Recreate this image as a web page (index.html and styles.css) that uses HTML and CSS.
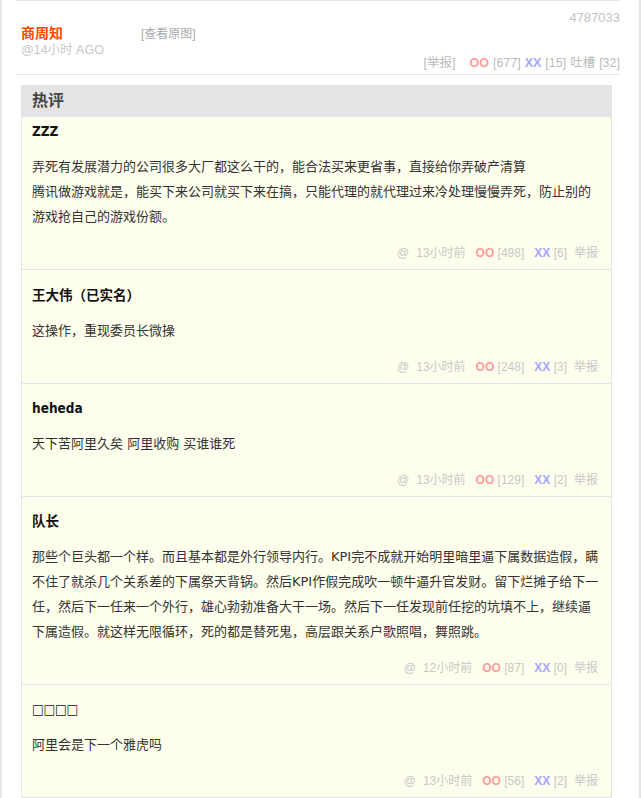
FILE: index.html
```html
<!DOCTYPE html>
<html lang="zh-CN">
<head>
<meta charset="utf-8">
<title>热评</title>
<link rel="stylesheet" href="styles.css">
</head>
<body>
<div class="page">
  <div class="post">
    <div class="pid">4787033</div>
    <div class="author-row"><b class="author">商周知</b><span class="orig">[查看原图]</span></div>
    <div class="time">@14小时 AGO</div>
    <div class="votes"><span class="report">[举报]</span><b class="oo">OO</b> [677] <b class="xx">XX</b> [15] 吐槽 [32]</div>
  </div>

  <div class="hot">
    <div class="hot-head">热评</div>
    <div class="list">
      <div class="item">
        <div class="name">ZZZ</div>
        <div class="text">弄死有发展潜力的公司很多大厂都这么干的，能合法买来更省事，直接给你弄破产清算<br>腾讯做游戏就是，能买下来公司就买下来在搞，只能代理的就代理过来冷处理慢慢弄死，防止别的游戏抢自己的游戏份额。</div>
        <div class="foot"><span>@</span><span class="t">13小时前</span><span class="v"><b class="oo">OO</b> [498]</span><span class="v"><b class="xx">XX</b> [6]</span><span class="r">举报</span></div>
      </div>
      <div class="item">
        <div class="name">王大伟（已实名）</div>
        <div class="text">这操作，重现委员长微操</div>
        <div class="foot"><span>@</span><span class="t">13小时前</span><span class="v"><b class="oo">OO</b> [248]</span><span class="v"><b class="xx">XX</b> [3]</span><span class="r">举报</span></div>
      </div>
      <div class="item">
        <div class="name">heheda</div>
        <div class="text">天下苦阿里久矣 阿里收购 买谁谁死</div>
        <div class="foot"><span>@</span><span class="t">13小时前</span><span class="v"><b class="oo">OO</b> [129]</span><span class="v"><b class="xx">XX</b> [2]</span><span class="r">举报</span></div>
      </div>
      <div class="item">
        <div class="name">队长</div>
        <div class="text">那些个巨头都一个样。而且基本都是外行领导内行。KPI完不成就开始明里暗里逼下属数据造假，瞒不住了就杀几个关系差的下属祭天背锅。然后KPI作假完成吹一顿牛逼升官发财。留下烂摊子给下一任，然后下一任来一个外行，雄心勃勃准备大干一场。然后下一任发现前任挖的坑填不上，继续逼下属造假。就这样无限循环，死的都是替死鬼，高层跟关系户歌照唱，舞照跳。</div>
        <div class="foot"><span>@</span><span class="t">12小时前</span><span class="v"><b class="oo">OO</b> [87]</span><span class="v"><b class="xx">XX</b> [0]</span><span class="r">举报</span></div>
      </div>
      <div class="item">
        <div class="name">□□□□</div>
        <div class="text">阿里会是下一个雅虎吗</div>
        <div class="foot"><span>@</span><span class="t">13小时前</span><span class="v"><b class="oo">OO</b> [56]</span><span class="v"><b class="xx">XX</b> [2]</span><span class="r">举报</span></div>
      </div>
    </div>
  </div>
</div>
</body>
</html>
```

FILE: styles.css
```css
html, body {
  margin: 0;
  padding: 0;
  background: #fff;
  overflow: hidden;
}

body {
  font-family: "Liberation Sans", Arial, "Noto Sans CJK SC", sans-serif;
  font-size: 12px;
  color: #333;
}

.page {
  width: 637px;
  height: 798px;
  border-left: 2px solid #e6e6e6;
  border-right: 2px solid #e6e6e6;
}

.post {
  margin-left: 14px;
  width: 599px;
  padding: 10px 0 4px 5px;
  border-top: 1px solid #e6e6e6;
  border-bottom: 1px solid #e6e6e6;
}

.pid {
  text-align: right;
  font-size: 13px;
  line-height: 14px;
  color: #c4c4c4;
}

.author-row {
  line-height: 16px;
}

.author {
  display: inline-block;
  width: 120px;
  font-size: 14px;
  color: #ff4a00;
}

.orig {
  font-size: 12px;
  color: #aaa;
}

.time {
  margin-top: 1px;
  line-height: 14px;
  font-size: 12.5px;
  color: #c8c8c8;
}

.votes {
  margin-top: -1px;
  line-height: 14px;
  text-align: right;
  font-size: 12.5px;
  word-spacing: 0.5px;
  color: #bbb;
}

.report {
  margin-right: 14px;
}

.oo {
  color: #ff9c9c;
}

.xx {
  color: #a6a6ff;
}

.hot {
  margin: 10px 0 0 19px;
  width: 591px;
}

.hot-head {
  height: 32px;
  line-height: 32px;
  padding-left: 11px;
  background: #e4e4e4;
  font-size: 16px;
  font-weight: bold;
  color: #444;
}

.list {
  background: #fefeec;
  border-left: 1px solid #e4e4e4;
  border-right: 1px solid #e4e4e4;
}

.item {
  padding: 14px 10px 8px 10px;
  border-bottom: 1px solid #e4e4e4;
}

.item:first-child {
  padding-top: 4px;
}

.item:nth-child(2) {
  padding-top: 15px;
}

.name {
  font-family: "DejaVu Sans Condensed", "DejaVu Sans", Verdana, "Noto Sans CJK SC", sans-serif;
  font-stretch: condensed;
  font-size: 13.5px;
  font-weight: bold;
  line-height: 20px;
  color: #111;
}

.text {
  margin-top: 13px;
  font-family: "DejaVu Sans", Tahoma, "Noto Sans CJK SC", sans-serif;
  font-size: 13px;
  line-height: 25px;
  color: #333;
}

.foot {
  margin-top: 16px;
  padding-right: 3px;
  display: flex;
  justify-content: flex-end;
  line-height: 16px;
  font-size: 12px;
  color: #c8c8c8;
}

.foot .t {
  margin-left: 7px;
}

.foot .v {
  margin-left: 10px;
}

.foot .r {
  margin-left: 7px;
}
```
